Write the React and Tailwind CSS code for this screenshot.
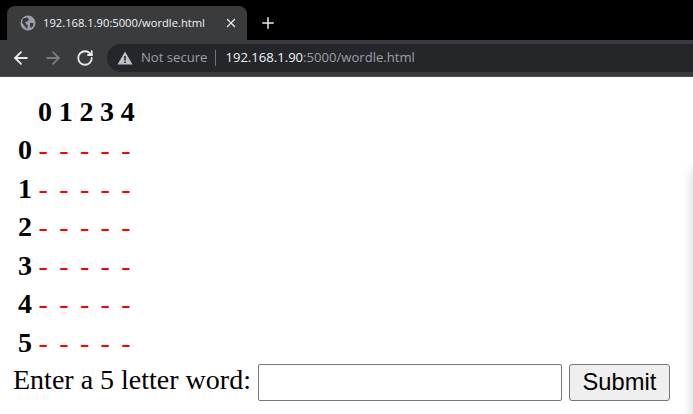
import React from 'react';
import { ArrowLeft, ArrowRight, RotateCw, X, Plus } from 'lucide-react';

const columns = [0, 1, 2, 3, 4];
const rows = [0, 1, 2, 3, 4, 5];

const Globe = () => (
  <svg width="16" height="16" viewBox="0 0 16 16" className="shrink-0">
    <circle cx="8" cy="8" r="7.5" fill="#9aa0a6" />
    <path d="M3 3.5 L7 2.5 L9 4 L7.5 6.5 L5 7 L6.5 9.5 L8 10.5 L7 14 L4.5 11 L2 7.5 Z" fill="#3a3b3d" />
    <path d="M10 8 L13.5 8 L13 11 L11 13 L10 11 Z" fill="#3a3b3d" />
  </svg>
);

const Warning = () => (
  <svg width="16" height="14" viewBox="0 0 16 14" className="shrink-0">
    <path d="M8 0.5 L15.5 13.5 L0.5 13.5 Z M7.2 5 V9.5 H8.8 V5 Z M7.2 10.4 V12 H8.8 V10.4 Z" fill="#bdc1c6" fillRule="evenodd" />
  </svg>
);

const BrowserChrome = () => (
  <div className="font-['Open_Sans',sans-serif]">
    <div className="flex h-10 items-end bg-black pl-[7px]">
      <div className="flex h-[34px] w-[240px] items-center rounded-t-lg bg-[#3a3b3d] pl-[13px] pr-[9px]">
        <Globe />
        <span className="ml-[7px] flex-1 text-[11.2px] leading-none text-[#f1f3f4]">192.168.1.90:5000/wordle.html</span>
        <X size={14} color="#f1f3f4" strokeWidth={2.2} />
      </div>
      <Plus size={18} color="#e8eaed" strokeWidth={2} className="mb-[8px] ml-[12px]" />
    </div>
    <div className="flex h-[37px] items-center border-b border-[#4a4a4c] bg-[#3a3b3d] pb-[1px] pl-[11px]">
      <ArrowLeft size={20} color="#e8eaed" strokeWidth={2.2} />
      <ArrowRight size={20} color="#7b7c7f" strokeWidth={2.2} className="ml-[12px]" />
      <RotateCw size={18} color="#e8eaed" strokeWidth={2.4} className="ml-[13px]" />
      <div className="ml-[13px] flex h-[28px] flex-1 items-center rounded-l-[14px] bg-[#25262a] pl-[10px] text-[13.1px]">
        <Warning />
        <span className="ml-[8px] text-[#9aa0a6]">Not secure</span>
        <span className="mx-[8px] h-[16px] w-px bg-[#70757a]" />
        <span className="ml-[1px] text-[#f1f3f4]">192.168.1.90</span>
        <span className="text-[#9aa0a6]">:5000/wordle.html</span>
      </div>
    </div>
  </div>
);

const Board = () => (
  <div className="grid grid-cols-[38.5px_repeat(5,20.7px)] pt-[19px] text-[28px] font-bold leading-[31px] text-black">
    <span />
    {columns.map((c) => (
      <span key={c} className="-ml-[0.5px]">{c}</span>
    ))}
    {rows.map((r) => (
      <React.Fragment key={r}>
        <span className="mb-[0.6px] mt-[7px] pl-[18px]">{r}</span>
        {columns.map((c) => (
          <span key={c} className="mb-[0.6px] mt-[7px] font-normal text-[#ff0000]">-</span>
        ))}
      </React.Fragment>
    ))}
  </div>
);

const WordForm = () => (
  <form className="flex items-start pl-[13px] pt-[2.5px] text-[28px] leading-[38px] text-black">
    <label>Enter a 5 letter word:</label>
    <input type="text" className="ml-[7px] mt-[3px] h-[37px] w-[304px] rounded-[2px] border border-[#767676] bg-white" />
    <button type="button" className="ml-[7px] mt-[3px] h-[37px] w-[101px] rounded-[3px] border border-[#767676] bg-[#efefef] font-['Liberation_Sans',sans-serif] text-[23.7px] leading-none">
      Submit
    </button>
  </form>
);

const App = () => {
  return (
    <div className="relative h-[414px] w-[693px] overflow-hidden bg-white font-['Liberation_Serif',serif]">
      <BrowserChrome />
      <Board />
      <WordForm />
      {/* panel just off screen, only its shadow shows */}
      <div className="absolute left-[693px] top-[170px] h-[300px] w-[100px] shadow-[0_0_12px_rgba(0,0,0,0.18)]" />
    </div>
  );
};

export default App;
